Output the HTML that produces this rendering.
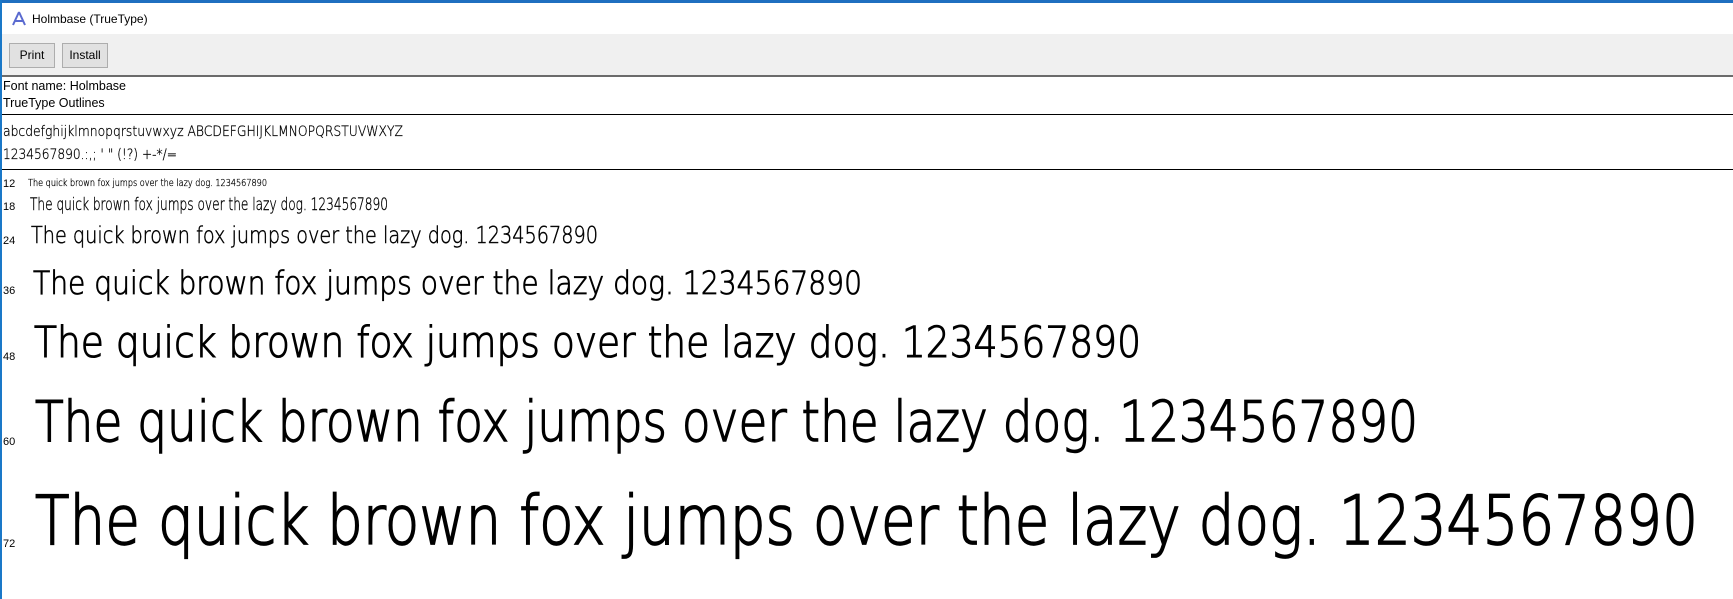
<!DOCTYPE html>
<html><head><meta charset="utf-8"><style>
*{margin:0;padding:0;box-sizing:border-box}
body{width:1733px;height:599px;overflow:hidden;background:#fff;position:relative;font-family:"Liberation Sans",sans-serif;color:#000}
.a{position:absolute;white-space:nowrap}
.ui{font-size:12px;line-height:14px}
.btn{position:absolute;top:43px;height:25px;background:#e1e1e1;border:1px solid #adadad;font-size:12px;line-height:23px;text-align:center}
.s{position:absolute;white-space:nowrap;line-height:1;transform-origin:0 0;font-family:"DejaVu Sans",sans-serif;font-weight:200;color:#000}
.lb{position:absolute;left:3px;font-size:11px;line-height:12px}
</style></head><body>
<div class="a" style="left:0;top:0;width:1733px;height:3px;background:#1f6fc0"></div>
<div class="a" style="left:0;top:0;width:2px;height:599px;background:#1a78c8"></div>
<svg class="a" style="left:11px;top:11px" width="16" height="16" viewBox="0 0 16 16"><path d="M8 1 L2 14 M8 1 L14 14 M4 10 H12" stroke="#5a6ad0" stroke-width="2" fill="none"/></svg>
<div class="a ui" style="left:32px;top:12px">Holmbase (TrueType)</div>
<div class="a" style="left:2px;top:34px;width:1731px;height:41px;background:#f0f0f0"></div>
<div class="btn" style="left:9px;width:46px">Print</div>
<div class="btn" style="left:62px;width:46px">Install</div>
<div class="a" style="left:2px;top:75px;width:1731px;height:2px;background:#6b6b6b"></div>
<div class="a ui" style="left:3px;top:79px;font-size:12.5px">Font name: Holmbase</div>
<div class="a ui" style="left:3px;top:96px;font-size:12.5px">TrueType Outlines</div>
<div class="a" style="left:2px;top:114px;width:1731px;height:1px;background:#000"></div>
<div class="s" data-w="400" style="left:3px;top:125px;font-size:14px;-webkit-text-stroke:0.3px #000">abcdefghijklmnopqrstuvwxyz ABCDEFGHIJKLMNOPQRSTUVWXYZ</div>
<div class="s" data-w="174" style="left:3px;top:148px;font-size:14px;-webkit-text-stroke:0.3px #000">1234567890.:,; ' " (!?) +-*/=</div>
<div class="a" style="left:2px;top:169px;width:1731px;height:1px;background:#000"></div>

<div class="lb" style="top:178px">12</div>
<div class="lb" style="top:201px">18</div>
<div class="lb" style="top:235px">24</div>
<div class="lb" style="top:285px">36</div>
<div class="lb" style="top:351px">48</div>
<div class="lb" style="top:436px">60</div>
<div class="lb" style="top:538px">72</div>

<div class="s f" data-w="239" data-b="188" data-fs="10" data-st="0.3" style="left:28px">The quick brown fox jumps over the lazy dog. 1234567890</div>
<div class="s f" data-w="358" data-b="212" data-fs="17" data-st="0.4" style="left:30px">The quick brown fox jumps over the lazy dog. 1234567890</div>
<div class="s f" data-w="567" data-b="245" data-fs="23" data-st="0.5" style="left:31px">The quick brown fox jumps over the lazy dog. 1234567890</div>
<div class="s f" data-w="829" data-b="295" data-fs="32" data-st="0.8" style="left:33px">The quick brown fox jumps over the lazy dog. 1234567890</div>
<div class="s f" data-w="1107" data-b="360" data-fs="43" data-st="1.1" style="left:34px">The quick brown fox jumps over the lazy dog. 1234567890</div>
<div class="s f" data-w="1383" data-b="444" data-fs="56" data-st="1.4" style="left:35px">The quick brown fox jumps over the lazy dog. 1234567890</div>
<div class="s f" data-w="1663" data-b="547" data-fs="68" data-st="1.7" style="left:35px">The quick brown fox jumps over the lazy dog. 1234567890</div>
<script>
document.querySelectorAll('.f').forEach(function(e){
 var fs=+e.dataset.fs;e.style.fontSize=fs+'px';
 e.style.top=(+e.dataset.b-0.875*fs)+'px';
 e.style.webkitTextStroke=e.dataset.st+'px #000';
});
document.querySelectorAll('.s').forEach(function(e){
 var w=e.getBoundingClientRect().width;
 e.style.transform='scaleX('+(+e.dataset.w/w)+')';
});
</script>
</body></html>
